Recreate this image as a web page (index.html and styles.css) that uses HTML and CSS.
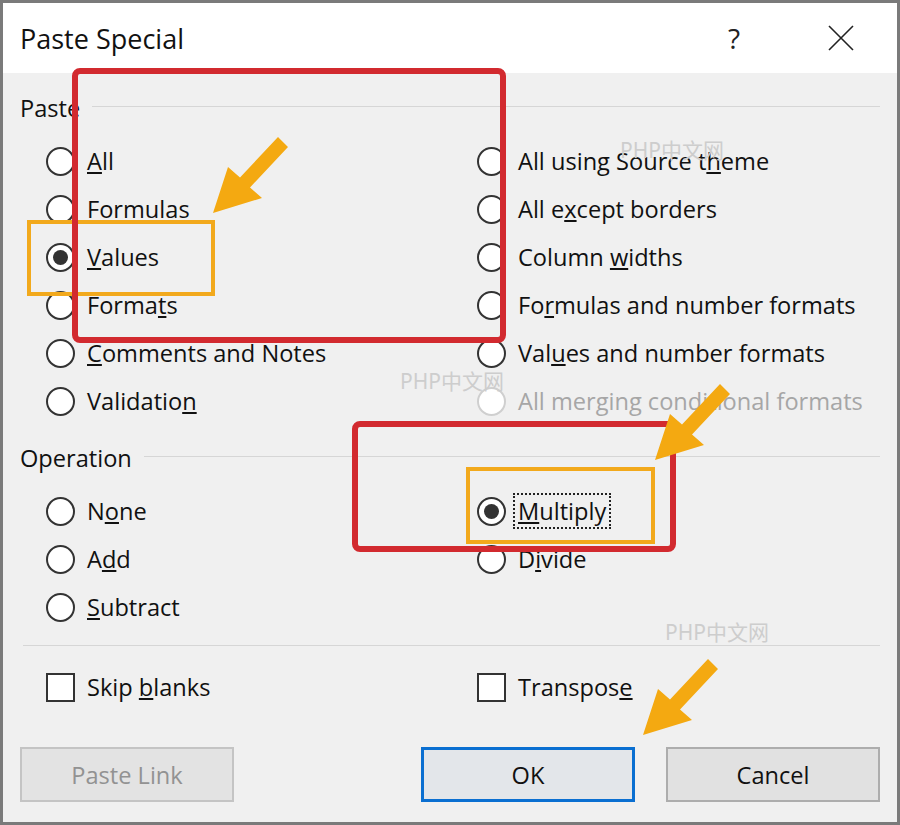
FILE: index.html
```html
<!DOCTYPE html>
<html lang="en">

<head>
    <meta charset="UTF-8">
    <meta name="viewport" content="width=device-width, initial-scale=1.0">
    <title>Paste Special</title>
    <link rel="stylesheet" href="styles.css">
</head>

<body>

    <div class="dialog">
        <div class="titlebar">
            <span class="title">Paste Special</span>
            <span class="help">?</span>
            <svg class="close" width="26" height="26" viewBox="0 0 26 26">
                <path d="M1 1 L25 25 M25 1 L1 25" stroke="#222" stroke-width="1.6" fill="none" />
            </svg>
        </div>

        <div class="content">
            <div class="group-head">
                <span>Paste</span>
                <div class="line"></div>
            </div>

            <div class="options">
                <div class="row"><span class="radio"></span><span><u>A</u>ll</span></div>
                <div class="row"><span class="radio"></span><span>All using Source t<u>h</u>eme</span></div>
                <div class="row"><span class="radio"></span><span>Formulas</span></div>
                <div class="row"><span class="radio"></span><span>All e<u>x</u>cept borders</span></div>
                <div class="row"><span class="radio checked"></span><span><u>V</u>alues</span></div>
                <div class="row"><span class="radio"></span><span>Column <u>w</u>idths</span></div>
                <div class="row"><span class="radio"></span><span>Forma<u>t</u>s</span></div>
                <div class="row"><span class="radio"></span><span>Fo<u>r</u>mulas and number formats</span></div>
                <div class="row"><span class="radio"></span><span><u>C</u>omments and Notes</span></div>
                <div class="row"><span class="radio"></span><span>Val<u>u</u>es and number formats</span></div>
                <div class="row"><span class="radio"></span><span>Validatio<u>n</u></span></div>
                <div class="row disabled"><span class="radio"></span><span>All merging conditional formats</span></div>
            </div>

            <div class="group-head op-head">
                <span>Operation</span>
                <div class="line"></div>
            </div>

            <div class="options">
                <div class="row"><span class="radio"></span><span>N<u>o</u>ne</span></div>
                <div class="row"><span class="radio checked"></span><span class="focus"><u>M</u>ultiply</span></div>
                <div class="row"><span class="radio"></span><span>A<u>d</u>d</span></div>
                <div class="row"><span class="radio"></span><span>D<u>i</u>vide</span></div>
                <div class="row"><span class="radio"></span><span><u>S</u>ubtract</span></div>
            </div>

            <div class="divider"></div>

            <div class="options checks">
                <div class="row"><span class="checkbox"></span><span>Skip <u>b</u>lanks</span></div>
                <div class="row"><span class="checkbox"></span><span>Transpos<u>e</u></span></div>
            </div>

            <div class="buttons">
                <button class="btn" disabled>Paste Link</button>
                <div class="spacer"></div>
                <button class="btn default">OK</button>
                <button class="btn">Cancel</button>
            </div>
        </div>

        <!-- annotations drawn over the screenshot -->
        <div class="mark orange mark-values"></div>
        <div class="mark orange mark-multiply"></div>
        <div class="mark red mark-paste"></div>
        <div class="mark red mark-op"></div>

        <svg class="arrow arrow-1" width="80" height="80" viewBox="0 0 80 80">
            <path d="M2 78 L17 32 L29 42.5 L67 2 L77 12 L39 52.5 L51 63 Z" />
        </svg>
        <svg class="arrow arrow-2" width="80" height="80" viewBox="0 0 80 80">
            <path d="M2 78 L17 32 L29 42.5 L67 2 L77 12 L39 52.5 L51 63 Z" />
        </svg>
        <svg class="arrow arrow-3" width="80" height="80" viewBox="0 0 80 80">
            <path d="M2 78 L17 32 L29 42.5 L67 2 L77 12 L39 52.5 L51 63 Z" />
        </svg>

        <span class="watermark wm-1">PHP中文网</span>
        <span class="watermark wm-2">PHP中文网</span>
        <span class="watermark wm-3">PHP中文网</span>
    </div>

</body>

</html>
```

FILE: styles.css
```css
* {
    margin: 0;
    padding: 0;
    box-sizing: border-box;
}

body {
    background-color: #ffffff;
    font-family: "Open Sans", "Noto Sans", sans-serif;
    color: #111;
}

.dialog {
    position: relative;
    width: 900px;
    height: 825px;
    border: 3px solid #7a7a7a;
    background-color: #f0f0f0;
    overflow: hidden;
}

.titlebar {
    height: 70px;
    background-color: #ffffff;
    display: flex;
    align-items: center;
    padding-left: 17px;
    padding-right: 43px;
}

.title {
    font-size: 27px;
    flex: 1;
}

.help {
    font-size: 28px;
    color: #222;
    margin-right: 88px;
}

.content {
    padding: 20px 17px 0 17px;
}

.group-head {
    height: 30px;
    display: flex;
    align-items: center;
    gap: 12px;
    font-size: 23.6px;
}

.group-head .line {
    flex: 1;
    height: 1px;
    background-color: #d6d6d6;
    margin-top: -4px;
}

.op-head {
    margin-top: 18px;
}

.options {
    display: grid;
    grid-template-columns: 431px 1fr;
    padding-left: 26px;
    margin-top: 14px;
}

.row {
    height: 48px;
    display: flex;
    align-items: center;
    gap: 12px;
    font-size: 23.6px;
}

.row.disabled {
    color: #a6a6a6;
}

.radio {
    width: 29px;
    height: 29px;
    border: 2px solid #333;
    border-radius: 50%;
    background-color: #fff;
    display: flex;
    justify-content: center;
    align-items: center;
}

.row.disabled .radio {
    border-color: #cfcfcf;
}

.radio.checked::after {
    content: "";
    width: 15px;
    height: 15px;
    border-radius: 50%;
    background-color: #333;
}

.checkbox {
    width: 29px;
    height: 29px;
    border: 2px solid #333;
    background-color: #fff;
}

.focus {
    outline: 2px dotted #222;
    padding: 0 3px;
    margin-left: -3px;
}

.divider {
    height: 1px;
    background-color: #d6d6d6;
    margin-top: 14px;
    margin-left: 3px;
}

.checks {
    margin-top: 17px;
}

.buttons {
    display: flex;
    gap: 31px;
    margin-top: 36px;
}

.spacer {
    flex: 1;
}

.btn {
    width: 214px;
    height: 55px;
    font-family: "Open Sans", "Noto Sans", sans-serif;
    font-size: 23.6px;
    color: #111;
    background-color: #e1e1e1;
    border: 2px solid #adadad;
}

.btn:disabled {
    color: #929292;
    background-color: #e3e3e3;
    border-color: #c4c4c4;
}

.btn.default {
    border: 3px solid #0a6fd1;
    background-color: #e3e6ea;
}

/* annotations */
.mark {
    position: absolute;
    pointer-events: none;
}

.red {
    border: 6px solid #d22a2f;
    border-radius: 8px;
}

.orange {
    border: 4px solid #f2a91c;
}

.mark-paste {
    left: 69px;
    top: 65px;
    width: 434px;
    height: 275px;
}

.mark-op {
    left: 349px;
    top: 418px;
    width: 324px;
    height: 131px;
}

.mark-values {
    left: 24px;
    top: 217px;
    width: 188px;
    height: 76px;
}

.mark-multiply {
    left: 463px;
    top: 464px;
    width: 189px;
    height: 77px;
}

.arrow {
    position: absolute;
    fill: #f4a911;
}

.arrow-1 {
    left: 208px;
    top: 132px;
}

.arrow-2 {
    left: 650px;
    top: 379px;
}

.arrow-3 {
    left: 638px;
    top: 654px;
}

.watermark {
    position: absolute;
    font-family: "Noto Sans", "Noto Sans CJK SC", sans-serif;
    font-size: 21px;
    line-height: 26px;
    color: #cdcdcd;
}

.wm-1 {
    left: 617px;
    top: 134px;
}

.wm-2 {
    left: 397px;
    top: 365px;
}

.wm-3 {
    left: 662px;
    top: 616px;
}
```
